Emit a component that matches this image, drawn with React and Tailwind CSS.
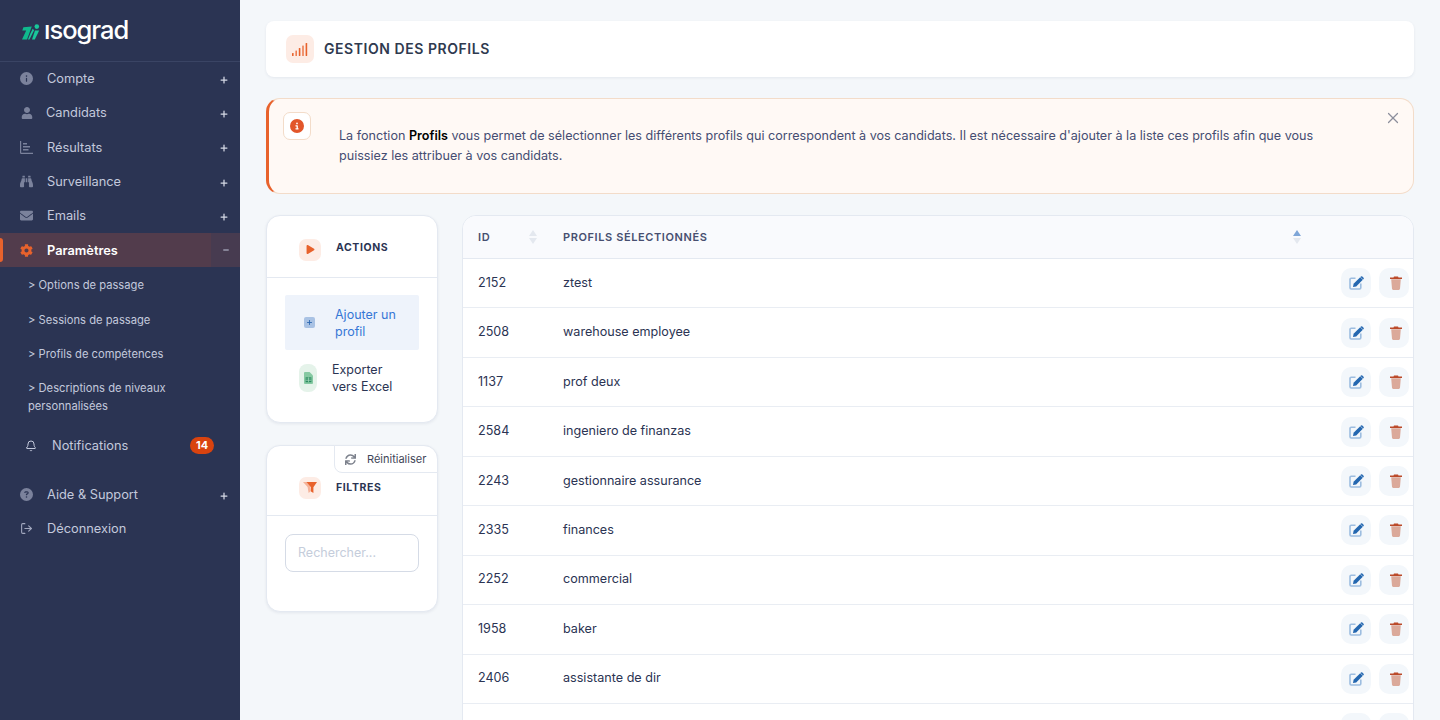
import { Plus, Minus, Bell, X, LogOut } from "lucide-react";
import { FaUser, FaBinoculars, FaEnvelope, FaCog, FaPlay, FaSync } from "react-icons/fa";
import { FaCircleInfo, FaCircleQuestion, FaCircleExclamation } from "react-icons/fa6";

const topMenu = [
  { label: "Compte", icon: <FaCircleExclamation className="text-[13px] rotate-180" />, pad: "gap-[14px]" },
  { label: "Candidats", icon: <FaUser className="text-[12px]" />, pad: "gap-[13px]" },
  { label: "Résultats", icon: <ChartIcon />, pad: "gap-[14px]" },
  { label: "Surveillance", icon: <FaBinoculars className="text-[13px]" />, pad: "gap-[14px]" },
  { label: "Emails", icon: <FaEnvelope className="text-[13px]" />, pad: "gap-[14px]" },
];

const subMenu = ["Options de passage", "Sessions de passage", "Profils de compétences"];

const profiles = [
  [2152, "ztest"],
  [2508, "warehouse employee"],
  [1137, "prof deux"],
  [2584, "ingeniero de finanzas"],
  [2243, "gestionnaire assurance"],
  [2335, "finances"],
  [2252, "commercial"],
  [1958, "baker"],
  [2406, "assistante de dir"],
  [2190, "assistant"],
];

function ChartIcon() {
  return (
    <svg width="13" height="13" viewBox="0 0 13 13" fill="currentColor">
      <path d="M0 0h1.2v11.8H13V13H1.2A1.2 1.2 0 0 1 0 11.8z" />
      <path d="M3 2h4v1.4H3zM3 5h7v1.4H3zM3 8h5.5v1.4H3z" />
    </svg>
  );
}

function SignalIcon() {
  return (
    <svg width="16" height="13" viewBox="0 0 16 13" fill="#e8622c">
      <rect x="0" y="10" width="1.6" height="3" rx="0.5" />
      <rect x="3.4" y="7.5" width="1.6" height="5.5" rx="0.5" opacity="0.8" />
      <rect x="6.8" y="5" width="1.6" height="8" rx="0.5" />
      <rect x="10.2" y="2.5" width="1.6" height="10.5" rx="0.5" opacity="0.8" />
      <rect x="13.6" y="0" width="1.6" height="13" rx="0.5" />
    </svg>
  );
}

function FilterIcon() {
  return (
    <svg width="14" height="11" viewBox="0 0 14 11">
      <path d="M0 0h8l-1 1.5 1 7.5-2.4 2L4.6 5z" fill="#f5b39a" />
      <path d="M3.5 0H14l-3.6 5.2V11L8 9.4V5.2z" fill="#e8622c" />
    </svg>
  );
}

function SheetIcon() {
  return (
    <svg width="9" height="12" viewBox="0 0 9 12">
      <path d="M1 0h4.6L9 3.4V11a1 1 0 0 1-1 1H1a1 1 0 0 1-1-1V1a1 1 0 0 1 1-1z" fill="#86c9a2" />
      <path d="M1.6 5.4h5.8v4.8H1.6z" fill="#23875a" />
      <path d="M1.6 7h5.8M1.6 8.6h5.8M4.5 5.4v4.8" stroke="#b7e0c8" strokeWidth="0.6" />
    </svg>
  );
}

function EditIcon() {
  return (
    <svg width="15" height="14" viewBox="0 0 15 14" className="ml-[1px]">
      <path d="M6.5 2.2H2.2A1.2 1.2 0 0 0 1 3.4v8.4A1.2 1.2 0 0 0 2.2 13h8.4a1.2 1.2 0 0 0 1.2-1.2V7.5" fill="none" stroke="#9dbde0" strokeWidth="1.6" />
      <path d="M11.2 1.2l2.6 2.6-6.6 6.6-3.2.6.6-3.2z" fill="#2467b0" />
      <path d="M11.9.5a1 1 0 0 1 1.4 0l1.2 1.2a1 1 0 0 1 0 1.4l-.4.4-2.6-2.6z" fill="#2467b0" />
    </svg>
  );
}

function TrashIcon() {
  return (
    <svg width="12" height="14" viewBox="0 0 12 14" className="ml-[4px]">
      <path d="M1.2 3.2h9.6l-.8 9.6a1.2 1.2 0 0 1-1.2 1.1H3.2A1.2 1.2 0 0 1 2 12.8z" fill="#dba99a" />
      <path d="M4 .5h4l.5 1H12v1.4H0V1.500h3.500z" fill="#bb4a2a" />
    </svg>
  );
}

function Logo() {
  return (
    <div className="flex items-center h-[62px] pl-[22px] border-b border-[#3a4464]">
      <svg width="18" height="16" viewBox="0 0 18 16" className="mt-[2px]">
        <circle cx="14.8" cy="2.6" r="2.3" fill="#19c79a" />
        <path d="M1.4 3.2L9.8 2.4 5 15.4H0L4.2 6.600H.3z" fill="#0fb98d" />
        <path d="M8.400 9.500l2.300-4.800 1.400 1.600L7.400 15.400H6z" fill="#19c79a" />
        <path d="M13 6.500h4.200L12.800 15.400H10z" fill="#19c79a" />
      </svg>
      <span className="ml-[4px] -mt-[1px] text-white text-[25.5px] font-medium tracking-[-1px] leading-none">ısograd</span>
    </div>
  );
}

function MenuRow({ label, icon, pad }) {
  return (
    <div className={`flex items-center h-[34.3px] pl-[20px] pr-[11px] text-[#c3c9dc] text-[12.8px] ${pad}`}>
      <span className="flex justify-center w-[13px] text-[#7b829c]">{icon}</span>
      <span className="flex-1">{label}</span>
      <Plus size={10} strokeWidth={3} className="mt-[2px] text-[#d5d9e5]" />
    </div>
  );
}

function Sidebar() {
  return (
    <aside className="w-[240px] shrink-0 bg-[#2b3453] h-[720px] overflow-hidden">
      <Logo />
      <div className="-mt-[0.5px]">
        {topMenu.map((item) => (
          <MenuRow key={item.label} {...item} />
        ))}
      </div>
      <div className="relative flex items-center h-[34px] mt-[0.5px] bg-[#523c4c] text-white text-[12.8px] font-semibold">
        <span className="absolute left-0 top-[5px] w-[3px] h-[24px] bg-[#e8622c] rounded-r-sm" />
        <span className="flex justify-center w-[13px] ml-[20px] mr-[14px] text-[#e8622c]">
          <FaCog className="text-[13px]" />
        </span>
        <span className="flex-1">Paramètres</span>
        <span className="flex items-center justify-center w-[29px] h-full bg-[#473b50]">
          <Minus size={8} strokeWidth={3} className="text-[#c3c9dc]" />
        </span>
      </div>
      <div className="text-[11.2px] text-[#c3c9dc] pl-[28px] pr-[10px] pt-[1px]">
        {subMenu.map((s) => (
          <div key={s} className="flex items-center h-[34.4px]">
            {"> " + s}
          </div>
        ))}
        <div className="pt-[7px] pb-[8px] leading-[18px]">
          {"> Descriptions de niveaux"}
          <br />
          personnalisées
        </div>
      </div>
      <div className="flex items-center h-[34px] pl-[25px] pr-[26px] text-[12.8px] text-[#c3c9dc] mt-[6px]">
        <Bell size={12} className="text-[#c3c9dc]" />
        <span className="flex-1 ml-[15px]">Notifications</span>
        <span className="flex items-center justify-center w-[24px] h-[17px] rounded-full bg-[#d9430f] text-white text-[11px] font-bold">14</span>
      </div>
      <div className="mt-[15px]">
        <MenuRow label="Aide & Support" icon={<FaCircleQuestion className="text-[13px]" />} pad="gap-[14px]" />
        <div className="flex items-center h-[34.3px] -mt-[1px] pl-[20px] gap-[14px] text-[12.8px] text-[#c3c9dc]">
          <span className="flex justify-center w-[13px] text-[#a2a8bf]">
            <LogOut size={13} />
          </span>
          <span>Déconnexion</span>
        </div>
      </div>
    </aside>
  );
}

function Badge({ children, className = "" }) {
  return (
    <span className={`flex items-center justify-center shrink-0 rounded-[7px] bg-[#fdece5] text-[#e8622c] ${className}`}>
      {children}
    </span>
  );
}

function ActionsCard() {
  return (
    <section className="bg-white rounded-[14px] border border-[#e4e9f1] shadow-[0_1px_3px_rgba(40,50,90,0.08)]">
      <div className="flex items-center h-[62px] border-b border-[#e4e9f1] pl-[32px] pt-[6px]">
        <Badge className="w-[22px] h-[22px]">
          <FaPlay className="text-[9px]" />
        </Badge>
        <h3 className="ml-[15px] -mt-[3px] text-[10.5px] font-bold tracking-[0.6px] text-[#2b3453]">ACTIONS</h3>
      </div>
      <div className="px-[18px] pt-[17px] pb-[17px]">
        <div className="flex items-center h-[55px] bg-[#eef3fb] rounded-[2px] pl-[19px] text-[12.5px] leading-[17px] text-[#3677d6]">
          <span className="flex items-center justify-center w-[11px] h-[11px] rounded-[2px] bg-[#a9c2e4] text-[#2a66b0] mr-[20px]">
            <Plus size={7} strokeWidth={3} />
          </span>
          <span className="w-[70px]">Ajouter un profil</span>
        </div>
        <div className="flex items-center h-[55px] pl-[14px] text-[12.5px] leading-[17px] text-[#2b3453]">
          <span className="flex items-center justify-center w-[18px] h-[28px] rounded-[8px] bg-[#e5f3ea] mr-[15px]">
            <SheetIcon />
          </span>
          <span className="w-[70px]">Exporter vers Excel</span>
        </div>
      </div>
    </section>
  );
}

function FiltersCard() {
  return (
    <section className="relative bg-white rounded-[14px] border border-[#e4e9f1] shadow-[0_1px_3px_rgba(40,50,90,0.08)]">
      <div className="absolute top-[-1px] right-[-1px] flex items-center w-[104px] h-[28px] pl-[10px] bg-white border border-[#e4e9f1] rounded-tr-[14px] rounded-bl-[8px] text-[11px] text-[#3f4658]">
        <FaSync className="text-[11px] text-[#7c818c] mr-[11px]" />
        Réinitialiser
      </div>
      <div className="flex items-center h-[70px] border-b border-[#e4e9f1] pl-[32px] pt-[14px]">
        <Badge className="w-[22px] h-[22px]">
          <FilterIcon />
        </Badge>
        <h3 className="ml-[15px] text-[10.5px] font-bold tracking-[0.6px] text-[#2b3453]">FILTRES</h3>
      </div>
      <div className="px-[18px] pt-[18px] pb-[39px]">
        <div className="flex items-center h-[38px] px-[12px] border border-[#d5dbe6] rounded-[8px] text-[12.5px] text-[#c5cddb]">
          Rechercher...
        </div>
      </div>
    </section>
  );
}

function SortArrows({ active }) {
  return (
    <span className="flex flex-col gap-[2px] items-center w-[8px]">
      <svg width="8" height="6" viewBox="0 0 8 6">
        <path d="M4 0l4 6H0z" fill={active ? "#7fa6d8" : "#e4e8ef"} />
      </svg>
      <svg width="8" height="6" viewBox="0 0 8 6">
        <path d="M4 6L0 0h8z" fill="#e4e8ef" />
      </svg>
    </span>
  );
}

function ProfilesTable() {
  return (
    <section className="flex-1 self-start bg-white rounded-t-[14px] border border-[#e4e9f1] overflow-hidden">
      <div className="flex items-center h-[43px] bg-[#f9fafd] border-b border-[#e4e9f1] text-[11px] font-semibold tracking-[0.6px] text-[#474f70]">
        <span className="w-[51px] ml-[15px]">ID</span>
        <SortArrows />
        <span className="ml-[26px] w-[730px]">PROFILS SÉLECTIONNÉS</span>
        <SortArrows active />
      </div>
      {profiles.map(([id, name]) => (
        <div key={id} className="flex items-center h-[49.45px] border-b border-[#e9edf3] text-[12.6px] text-[#2b3453]">
          <span className="w-[100px] pl-[15px]">{id}</span>
          <span className="flex-1">{name}</span>
          <div className="flex gap-[8px] pr-[4px]">
            <button className="flex items-center justify-center w-[30px] h-[30px] rounded-[10px] bg-[#f3f7fb]">
              <EditIcon />
            </button>
            <button className="flex items-center justify-center w-[30px] h-[30px] rounded-[10px] bg-[#f3f7fb]">
              <TrashIcon />
            </button>
          </div>
        </div>
      ))}
    </section>
  );
}

export default function App() {
  return (
    <div className="flex h-[720px] overflow-hidden bg-[#f4f7fa] font-['Inter',sans-serif]">
      <Sidebar />
      <main className="flex-1 px-[26px] pt-[21px] min-w-0">
        <header className="flex items-center h-[56px] pl-[20px] bg-white rounded-[8px] shadow-[0_1px_3px_rgba(40,50,90,0.08)]">
          <Badge className="w-[28px] h-[28px]">
            <SignalIcon />
          </Badge>
          <h1 className="ml-[10px] -mt-[1px] text-[14px] font-semibold tracking-[0.55px] text-[#2f3a4f]">GESTION DES PROFILS</h1>
        </header>

        <div className="relative mt-[21px] h-[96px] bg-[#fff9f5] border border-[#f3dcc9] border-l-[3px] border-l-[#e8622c] rounded-[14px] pl-[70px] pr-[70px] pt-[27px] text-[12.6px] leading-[20px] text-[#454d72]">
          <span className="absolute left-[14px] top-[13px] flex items-center justify-center w-[28px] h-[28px] rounded-[7px] bg-white border border-[#f3dcc9]">
            <FaCircleInfo className="text-[14px] text-[#e2562a]" />
          </span>
          La fonction <strong className="font-semibold text-black">Profils</strong> vous permet de sélectionner les différents profils qui correspondent à vos candidats. Il est nécessaire d'ajouter à la liste ces profils afin que vous puissiez les attribuer à vos candidats.
          <X size={18} strokeWidth={1.6} className="absolute right-[11px] top-[10px] text-[#8c8f9c]" />
        </div>

        <div className="flex gap-[24px] mt-[21px]">
          <div className="flex flex-col gap-[22px] w-[172px] shrink-0">
            <ActionsCard />
            <FiltersCard />
          </div>
          <ProfilesTable />
        </div>
      </main>
    </div>
  );
}
